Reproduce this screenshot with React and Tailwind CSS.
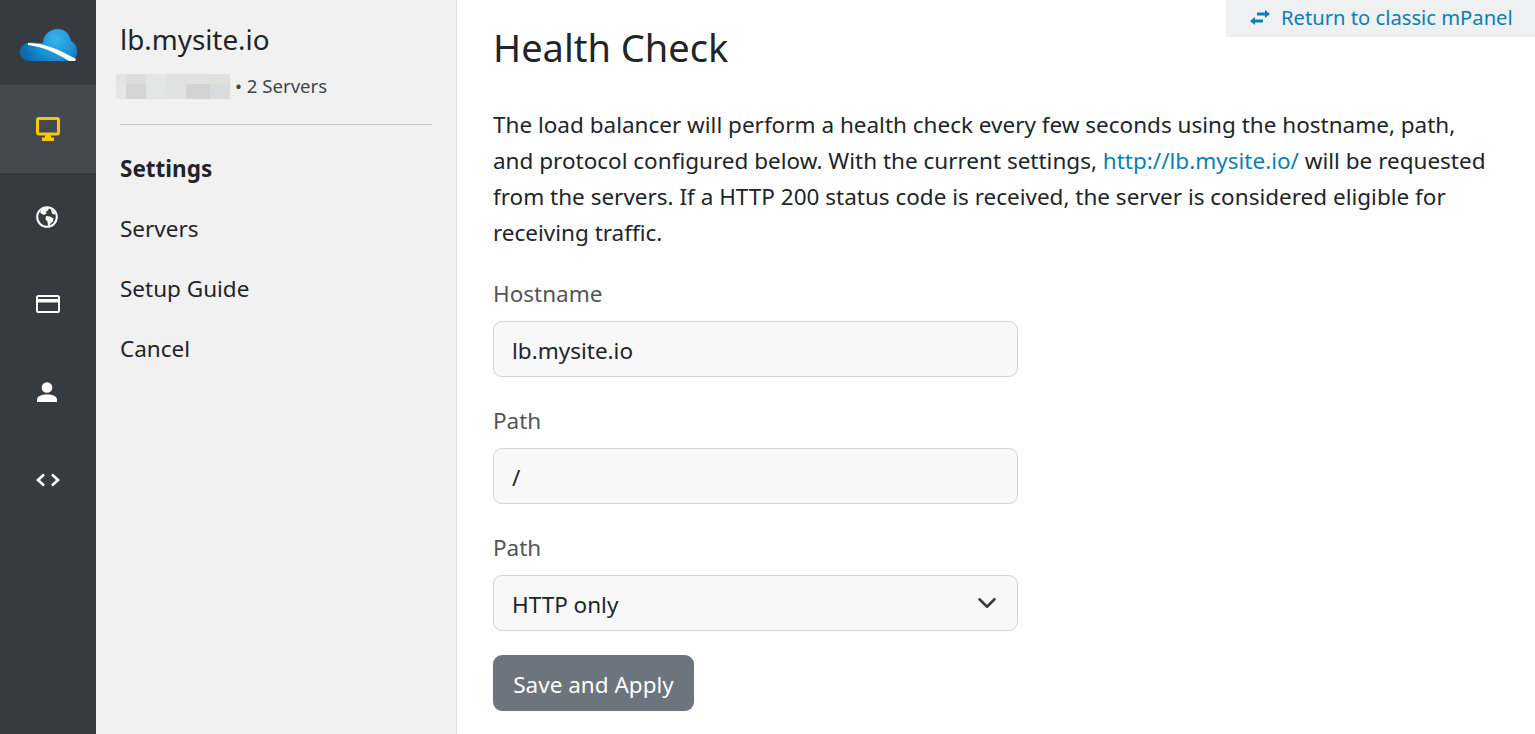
const BLUR = [
  'bg-[#e3e5e5]', 'bg-[#dbdcdc]', 'bg-[#e4e6e6]', 'bg-[#dfe1e2]', 'bg-[#e0e1e0]', 'bg-[#dfe0dc]',
  'bg-[#e5e7e7]', 'bg-[#d5d5d5]', 'bg-[#e3e5e5]', 'bg-[#e0e2e3]', 'bg-[#d3d3d3]', 'bg-[#d9dcdf]',
];

function Logo() {
  return (
    <svg viewBox="0 0 57 33" className="w-[57px] h-[33px] ml-[1px]">
      <defs>
        <radialGradient id="cloud" gradientUnits="userSpaceOnUse" cx="36" cy="10" r="34">
          <stop offset="0" stopColor="#38b4ec" />
          <stop offset="0.55" stopColor="#1a90d2" />
          <stop offset="1" stopColor="#0a6cb0" />
        </radialGradient>
      </defs>
      <path d="M10 32C4 32 0 28 0 23c0-5 4-9 9-9.500l14 .5C23 6 30 0 38 0c7 0 12 5 13 12C55 14 57 18 57 23c0 5-3 9-7 9z" fill="url(#cloud)" />
      <path d="M8 14C24 14 38 20 56 30l-1 2h-6C36 24 24 18 8 16z" fill="#fff" />
    </svg>
  );
}

function MonitorIcon() {
  return (
    <svg viewBox="0 0 24 24" className="w-[24px] h-[24px]" fill="none">
      <rect x="1.500" y="1.500" width="21" height="15.500" rx="1.500" stroke="currentColor" strokeWidth="3" />
      <path d="M9 18h6v2.500h3V24H6v-3.500h3z" fill="currentColor" />
    </svg>
  );
}

function GlobeIcon() {
  return (
    <svg viewBox="0 0 22 22" className="w-[22px] h-[22px] -ml-[2px] mt-[2px]" fill="none">
      <circle cx="11" cy="11" r="9.800" stroke="currentColor" strokeWidth="2" />
      <path d="M6 3l4-1.500 3 .5-1 2.500-2 1 .5 2-2.500 1.500L6 8 4 6.500zM10 10l4 .5 3.500 2-.5 3-2.500 2-1 2.500-1.500-.5-.5-4-2-2zM15 3l3 2.500 1.500 3-3-.5-1-2z" fill="currentColor" />
    </svg>
  );
}

function CardIcon() {
  return (
    <svg viewBox="0 0 24 18" className="w-[24px] h-[18px]" fill="none">
      <rect x="1" y="1" width="22" height="16" rx="1.500" stroke="currentColor" strokeWidth="2" />
      <rect x="1" y="4" width="22" height="3.500" fill="currentColor" />
    </svg>
  );
}

function PersonIcon() {
  return (
    <svg viewBox="0 0 20 20" className="w-[20px] h-[20px] -ml-[3px]" fill="currentColor">
      <circle cx="10" cy="5.500" r="5.300" />
      <path d="M0 20v-2.500c0-3 4-5 10-5s10 2 10 5V20z" />
    </svg>
  );
}

function CodeIcon() {
  return (
    <svg viewBox="0 0 24 14" className="w-[24px] h-[14px] mt-[2px]" fill="none" stroke="currentColor" strokeWidth="2.600">
      <path d="M8 1.500 2 7l6 5.500M16 1.500 22 7l-6 5.500" />
    </svg>
  );
}

function SwapIcon() {
  return (
    <svg viewBox="0 0 20 15" className="w-[20px] h-[15px] mr-[11px]" fill="currentColor">
      <path d="M7 2.500h8V0l5 4-5 4V5.500H7zM13 9.500v3H5V15l-5-4 5-4v2.500z" />
    </svg>
  );
}

function SelectChevron() {
  return (
    <svg viewBox="0 0 16 16" className="w-[20px] h-[20px] mr-[2px] -mt-[4px]" fill="none" stroke="#343a40" strokeWidth="2" strokeLinecap="round" strokeLinejoin="round">
      <path d="M2 5l6 6 6-6" />
    </svg>
  );
}

function RailItem({ icon, active }) {
  return (
    <div className={`h-[87.6px] flex items-center justify-center ${active ? 'bg-[#44484f] text-[#f5c800]' : 'text-white'}`}>
      {icon}
    </div>
  );
}

function Field({ label, first, children }) {
  return (
    <div className={first ? 'mt-[27px]' : 'mt-[28px]'}>
      <div className="text-[#555] mb-[11px] leading-[32px] h-[32px]">{label}</div>
      {children}
    </div>
  );
}

function Input({ children }) {
  return (
    <div className="w-[525px] h-[56px] rounded-[9px] border border-[#ced4da] bg-[#f8f8f8] px-[18px] pt-[3px] flex items-center justify-between text-[#212529]">
      {children}
    </div>
  );
}

export default function App() {
  return (
    <div className="h-[734px] w-[1535px] overflow-hidden flex bg-white text-[22.5px] leading-[36px] text-[#212529] font-['Noto_Sans','Open_Sans',sans-serif]">
      <div className="w-[96px] shrink-0 bg-[#363b42]">
        <div className="h-[85px] flex items-center justify-center pt-[5px]">
          <Logo />
        </div>
        <RailItem active icon={<MonitorIcon />} />
        <RailItem icon={<GlobeIcon />} />
        <RailItem icon={<CardIcon />} />
        <RailItem icon={<PersonIcon />} />
        <RailItem icon={<CodeIcon />} />
      </div>

      <div className="w-[361px] shrink-0 bg-[#f1f1f1] border-r border-[#dedede] px-[24px]">
        <div className="text-[27.800px] leading-[45px] mt-[17px]">lb.mysite.io</div>
        <div className="flex items-center mt-[12px] -ml-[4px] h-[25px]">
          <div className="grid grid-cols-[10px_20px_20px_20px_24px_20px] grid-rows-[10px_15px] w-[114px] h-[25px]">
            {BLUR.map((c, i) => (
              <div key={i} className={c} />
            ))}
          </div>
          <span className="ml-[5px] -mt-[2px] text-[18.600px] leading-[30px] text-[#40464d]">• 2 Servers</span>
        </div>
        <div className="h-px bg-[#c4c4c4] mt-[25px] mb-[26px]" />
        <div className="font-bold">Settings</div>
        <div className="mt-[24px]">Servers</div>
        <div className="mt-[24px]">Setup Guide</div>
        <div className="mt-[24px]">Cancel</div>
      </div>

      <div className="relative flex-1 pl-[36px] pr-[40px]">
        <div className="absolute top-0 right-0 w-[309px] h-[37px] bg-[#eef0f2] flex items-center pl-[24px] pb-[3px] text-[20.2px] text-[#0a7fb5] whitespace-nowrap">
          <SwapIcon />
          Return to classic mPanel
        </div>
        <h1 className="text-[38px] leading-[48px] mt-[23px] mb-[36px]">Health Check</h1>
        <p>
          The load balancer will perform a health check every few seconds using the hostname, path, and protocol configured below. With the current settings, <span className="text-[#0a7fb5]">http://lb.mysite.io/</span> will be requested from the servers. If a HTTP 200 status code is received, the server is considered eligible for receiving traffic.
        </p>
        <Field first label="Hostname"><Input>lb.mysite.io</Input></Field>
        <Field label="Path"><Input>/</Input></Field>
        <Field label="Path">
          <Input><span>HTTP only</span><SelectChevron /></Input>
        </Field>
        <button className="mt-[24px] w-[201px] h-[56px] pt-[4px] rounded-[9px] bg-[#6c757d] text-white">Save and Apply</button>
      </div>
    </div>
  );
}
